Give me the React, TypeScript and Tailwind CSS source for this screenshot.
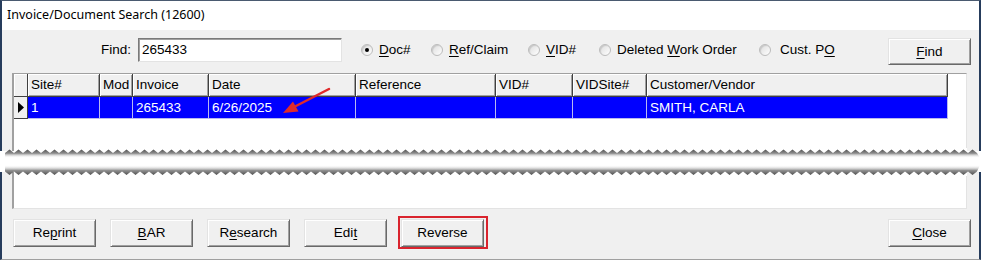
import React from "react";

const cols = [
  { w: 72, h: "Site#", v: "1" },
  { w: 33, h: "Mod", v: "" },
  { w: 76, h: "Invoice", v: "265433" },
  { w: 147, h: "Date", v: "6/26/2025" },
  { w: 140, h: "Reference", v: "" },
  { w: 77, h: "VID#", v: "" },
  { w: 74, h: "VIDSite#", v: "" },
  { w: 301, h: "Customer/Vendor", v: "SMITH, CARLA" },
];

function Radio({ checked, children, w }: { checked?: boolean; children: React.ReactNode; w?: number }) {
  return (
    <div className="h-[24px] flex items-center gap-[6px] shrink-0" style={w ? { width: w } : undefined}>
      <div className="w-[12px] h-[12px] rounded-full border border-[#bcbcbc] bg-gradient-to-br from-[#dcdcdc] to-white flex items-center justify-center shadow-[inset_1px_1px_1px_rgba(0,0,0,0.12)]">
        {checked && <div className="w-[4px] h-[4px] rounded-full bg-black" />}
      </div>
      <span className="whitespace-nowrap">{children}</span>
    </div>
  );
}

function Btn({ children, h = 28 }: { children: React.ReactNode; h?: number }) {
  return (
    <div
      className="w-[83px] shrink-0 flex items-center justify-center bg-[#f0f0f0] border border-t-[#e3e3e3] border-l-[#e3e3e3] border-b-[#696969] border-r-[#696969] shadow-[inset_1px_1px_0_#ffffff,inset_-1px_-1px_0_#a0a0a0]"
      style={{ height: h }}
    >
      {children}
    </div>
  );
}

function Tear() {
  const up: string[] = [];
  const lo: string[] = [];
  const start = 5;
  const end = 980;
  const step = 4.5;
  let i = 0;
  for (let x = start; x <= end; x += step, i++) {
    up.push(`${x},${i % 2 === 0 ? 5 : 1.5}`);
    lo.push(`${x},${i % 2 === 0 ? 23.5 : 27}`);
  }
  const upperPoly = `${start},10 ${up.join(" ")} ${end},10`;
  const lowerPoly = `${start},17 ${lo.join(" ")} ${end},17`;
  return (
    <svg width="984" height="28" className="block shrink-0">
      <defs>
        <linearGradient id="gu" x1="0" y1="0" x2="0" y2="1">
          <stop offset="0" stopColor="#505050" stopOpacity="1" />
          <stop offset="0.45" stopColor="#7a7a7a" stopOpacity="0.85" />
          <stop offset="1" stopColor="#ffffff" stopOpacity="0" />
        </linearGradient>
        <linearGradient id="gl" x1="0" y1="0" x2="0" y2="1">
          <stop offset="0" stopColor="#ffffff" stopOpacity="0" />
          <stop offset="0.55" stopColor="#7a7a7a" stopOpacity="0.85" />
          <stop offset="1" stopColor="#505050" stopOpacity="1" />
        </linearGradient>
      </defs>
      <rect x="0" y="0" width="2" height="3" fill="#263c5c" />
      <rect x="2" y="0" width="10" height="3" fill="#f0f0f0" />
      <rect x="12" y="0" width="2" height="3" fill="#a0a0a0" />
      <rect x="967" y="0" width="12" height="3" fill="#f0f0f0" />
      <rect x="979" y="0" width="2" height="3" fill="#263c5c" />
      <rect x="0" y="24" width="2" height="4" fill="#263c5c" />
      <rect x="2" y="24" width="10" height="4" fill="#f0f0f0" />
      <rect x="12" y="24" width="2" height="4" fill="#a0a0a0" />
      <rect x="967" y="24" width="12" height="4" fill="#f0f0f0" />
      <rect x="979" y="24" width="2" height="4" fill="#263c5c" />
      <polygon points={upperPoly} fill="url(#gu)" />
      <polygon points={lowerPoly} fill="url(#gl)" />
    </svg>
  );
}

export default function App() {
  return (
    <div className="w-[984px] h-[260px] bg-white relative overflow-hidden font-['Liberation_Sans',Arial,sans-serif] text-[13.5px] text-black leading-none">
      <div className="w-[981px] flex flex-col">
        {/* upper piece */}
        <div className="h-[148px] flex flex-col border-t border-l-2 border-r-2 border-[#263c5c] border-t-[#4a5a70]">
          <div className="h-[29px] bg-white flex items-center pl-[5px] font-['Noto_Sans',sans-serif] text-[12.5px]">
            Invoice/Document Search (12600)
          </div>
          <div className="flex-1 bg-[#f0f0f0] flex flex-col pt-[8px]">
            <div className="flex items-start h-[27px]">
              <div className="h-[24px] flex items-center ml-[99px] w-[37px]">Find:</div>
              <div className="w-[204px] h-[24px] bg-white border border-t-[#7a7a7a] border-l-[#7a7a7a] border-b-[#e3e3e3] border-r-[#e3e3e3] shadow-[inset_1px_1px_0_#a0a0a0] flex items-center pl-[3px]">
                265433
              </div>
              <div className="flex ml-[19px]">
                <Radio checked w={70}>
                  <span className="underline underline-offset-2">D</span>oc#
                </Radio>
                <Radio w={97}>
                  <span className="underline underline-offset-2">R</span>ef/Claim
                </Radio>
                <Radio w={71}>
                  <span className="underline underline-offset-2">V</span>ID#
                </Radio>
                <Radio w={160}>
                  Deleted <span className="underline underline-offset-2">W</span>ork Order
                </Radio>
                <Radio>
                  <span className="ml-[3px]">
                    Cust. P<span className="underline underline-offset-2">O</span>
                  </span>
                </Radio>
              </div>
              <div className="ml-auto mr-[8px]">
                <Btn h={27}>
                  <span>
                    <span className="underline underline-offset-2">F</span>ind
                  </span>
                </Btn>
              </div>
            </div>
            <div className="mt-[8px] ml-[10px] mr-[12px] flex-1 bg-white border-t border-l-2 border-r border-t-[#a0a0a0] border-l-[#a0a0a0] border-r-[#e3e3e3] relative">
              {/* header */}
              <div className="flex h-[23px]">
                <div className="w-[14px] shrink-0 bg-[#f0f0f0] border-r border-b border-[#404040] shadow-[inset_1px_1px_0_#fff]" />
                {cols.map((c) => (
                  <div
                    key={c.h}
                    className="shrink-0 bg-[#f0f0f0] border-r border-b border-[#404040] shadow-[inset_1px_1px_0_#fff,inset_-1px_-1px_0_#a0a0a0] flex items-center pl-[3px] whitespace-nowrap"
                    style={{ width: c.w }}
                  >
                    {c.h}
                  </div>
                ))}
              </div>
              {/* data row */}
              <div className="flex h-[22px]">
                <div className="w-[14px] shrink-0 bg-[#f0f0f0] border-r border-b border-[#404040] flex items-center justify-center">
                  <svg width="6" height="11" viewBox="0 0 6 11">
                    <polygon points="0,0 6,5.5 0,11" fill="#000" />
                  </svg>
                </div>
                {cols.map((c) => (
                  <div
                    key={c.h}
                    className="shrink-0 bg-[#0000ff] text-white border-r border-b border-[#b8b8f0] flex items-center pl-[3px] whitespace-nowrap"
                    style={{ width: c.w }}
                  >
                    {c.v}
                  </div>
                ))}
              </div>
            </div>
          </div>
        </div>

        <Tear />

        {/* lower piece */}
        <div className="h-[84px] flex flex-col border-l-2 border-r-2 border-b border-[#263c5c] border-b-[#a0a0a0] bg-[#f0f0f0]">
          <div className="h-[33px] ml-[10px] mr-[12px] bg-white border-l-2 border-r border-b border-l-[#a0a0a0] border-r-[#e3e3e3] border-b-[#e3e3e3]" />
          <div className="flex items-center mt-[7px] ml-[11px] h-[33px]">
            <div className="flex gap-[14px]">
              <Btn>
                <span>
                  Re<span className="underline underline-offset-2">p</span>rint
                </span>
              </Btn>
              <Btn>
                <span>
                  <span className="underline underline-offset-2">B</span>AR
                </span>
              </Btn>
              <Btn>
                <span>
                  R<span className="underline underline-offset-2">e</span>search
                </span>
              </Btn>
              <Btn>
                <span>
                  Edi<span className="underline underline-offset-2">t</span>
                </span>
              </Btn>
            </div>
            <div className="ml-[11px] h-[33px] border-2 border-[#d9232d] pl-[1px] pr-[2px] flex items-center">
              <Btn>Reverse</Btn>
            </div>
            <div className="ml-auto mr-[8px]">
              <Btn>
                <span>
                  <span className="underline underline-offset-2">C</span>lose
                </span>
              </Btn>
            </div>
          </div>
        </div>
      </div>

      {/* red annotation arrow */}
      <svg width="984" height="260" className="absolute left-0 top-0 pointer-events-none">
        <line x1="329" y1="89" x2="294" y2="107" stroke="#e02a2a" strokeWidth="2.5" strokeLinecap="round" />
        <polygon points="283,113 293,101.5 298.5,111.5" fill="#e02a2a" />
      </svg>
    </div>
  );
}
